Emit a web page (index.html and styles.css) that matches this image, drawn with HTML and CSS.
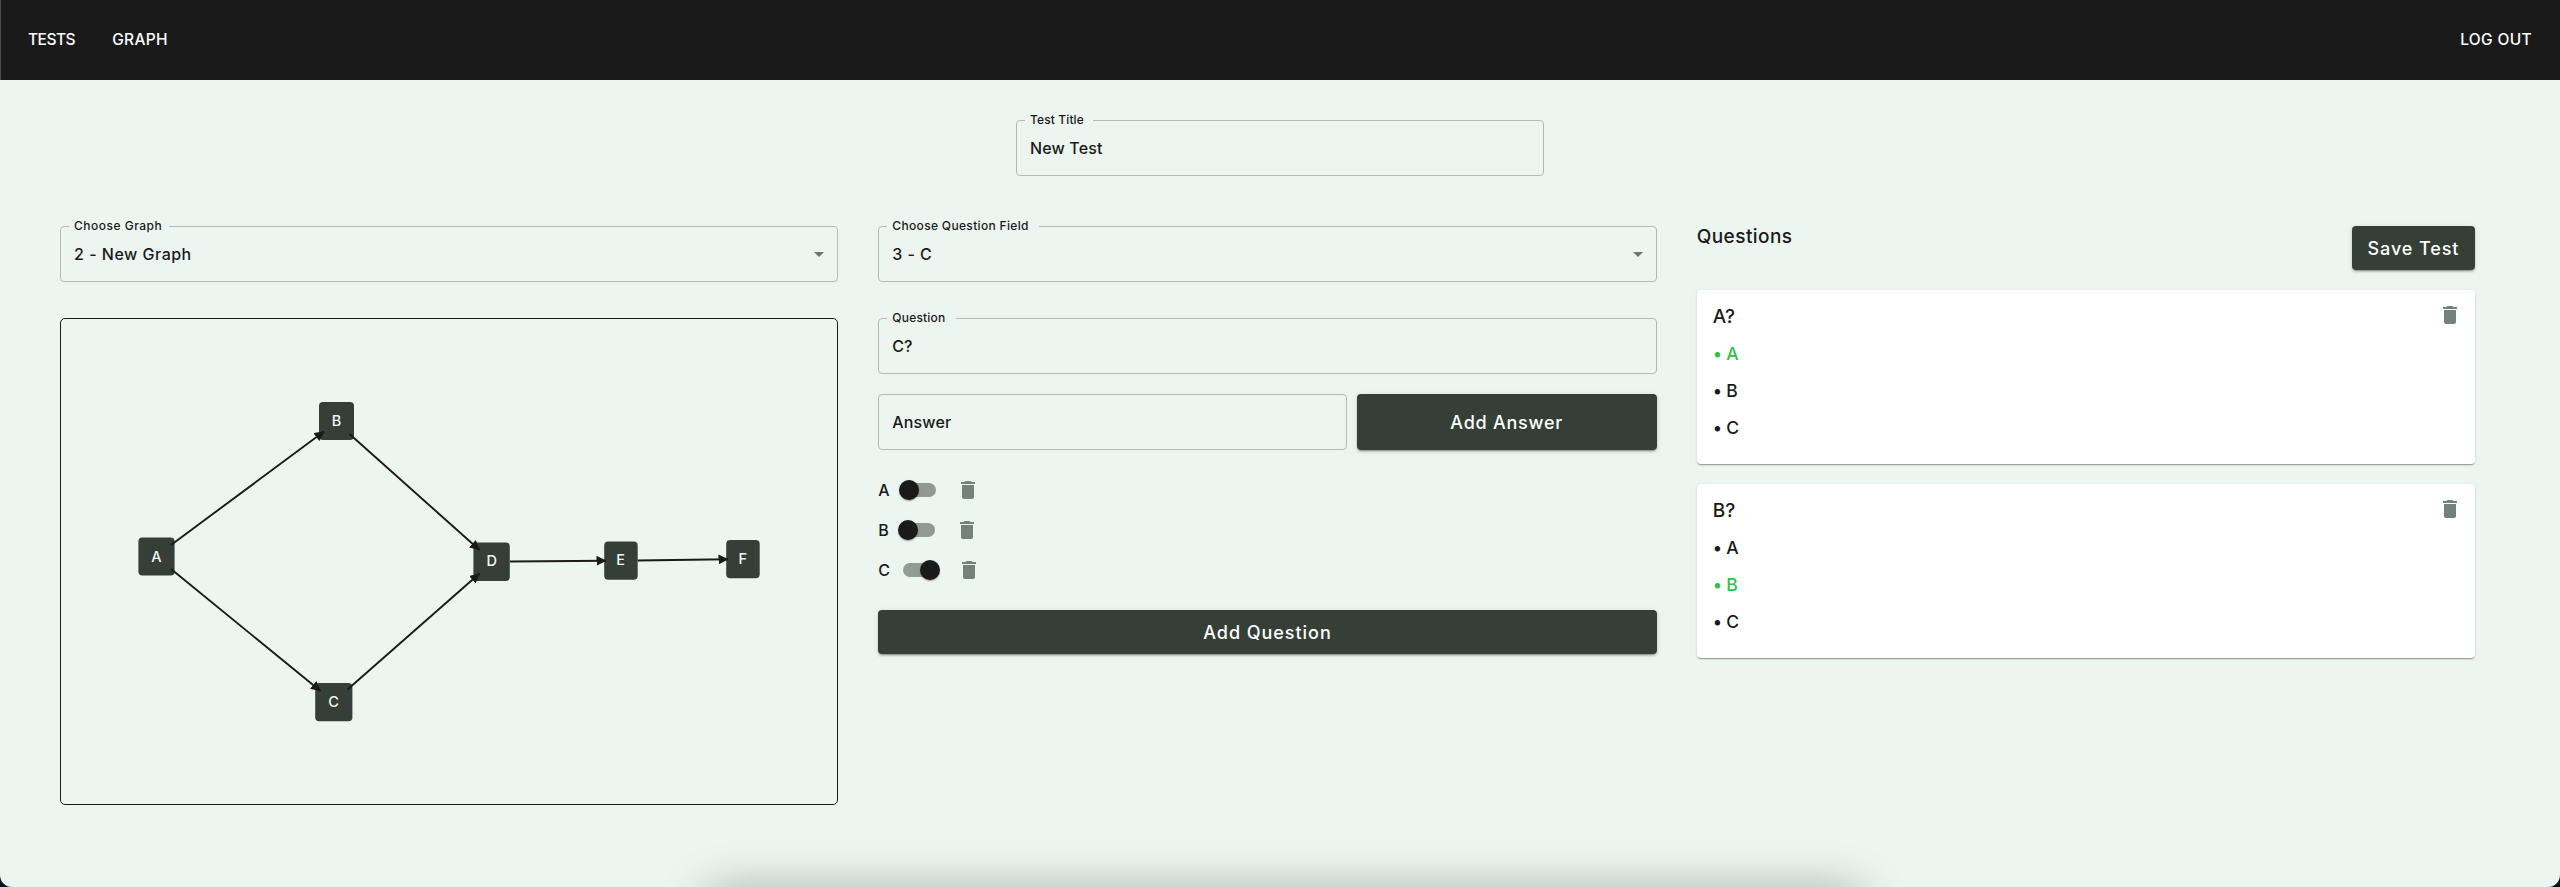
FILE: index.html
```html
<!DOCTYPE html>
<html lang="en">
<head>
<meta charset="utf-8">
<title>Test editor</title>
<link rel="stylesheet" href="styles.css">
</head>
<body>
<svg class="defs" width="0" height="0">
  <symbol id="trash" viewBox="0 0 24 24"><path d="M6 19c0 1.1.9 2 2 2h8c1.1 0 2-.9 2-2V7H6v12zM19 4h-3.500l-1-1h-5l-1 1H5v2h14V4z"/></symbol>
  <symbol id="caret" viewBox="0 0 24 24"><path d="M7 10l5 5 5-5z"/></symbol>
</svg>
<div class="window">
  <header class="bar">
    <nav class="nav"><a class="tests">TESTS</a><a class="graph-link">GRAPH</a></nav>
    <a class="logout">LOG OUT</a>
  </header>
  <main class="main">
    <fieldset class="field title-field"><legend class="l-title"><span>Test Title</span></legend><span class="v-title">New Test</span></fieldset>
    <div class="columns">
      <section class="col">
        <fieldset class="field"><legend class="l-graph"><span>Choose Graph</span></legend><span class="v-graph">2 - New Graph</span><svg class="caret"><use href="#caret"/></svg></fieldset>
        <div class="canvas">
          <svg class="diagram" viewBox="60 318 778 487" width="778" height="487">
            <defs><marker id="arrow" viewBox="0 0 10 10" refX="9.500" refY="5" markerWidth="10" markerHeight="10" markerUnits="userSpaceOnUse" orient="auto"><path d="M0 0L10 5L0 10z" fill="#1a1a1a"/></marker></defs>
            <g class="nodes">
              <rect x="138.400" y="537.400" width="36.200" height="38.200" rx="4"/>
              <rect x="319" y="402" width="35" height="38" rx="4"/>
              <rect x="315.200" y="683" width="37.200" height="38.200" rx="4"/>
              <rect x="473.400" y="542.500" width="36.400" height="38.400" rx="4"/>
              <rect x="604.200" y="541.600" width="33.500" height="38.200" rx="4"/>
              <rect x="726.200" y="540" width="33.500" height="38.200" rx="4"/>
            </g>
            <g class="edges">
              <line x1="171" y1="545" x2="324" y2="431.500"/>
              <line x1="171" y1="569" x2="320.500" y2="691"/>
              <line x1="349.500" y1="434" x2="479.500" y2="550"/>
              <line x1="347.500" y1="689.500" x2="479.500" y2="573.500"/>
              <line x1="510" y1="561.500" x2="606" y2="560.700"/>
              <line x1="637.700" y1="560.500" x2="728" y2="559.300"/>
            </g>
            <g class="labels">
              <text x="156.500" y="561.500">A</text><text x="336.500" y="425.500">B</text><text x="333.500" y="707.300">C</text>
              <text x="491.700" y="566.300">D</text><text x="620.500" y="565.300">E</text><text x="742.700" y="564">F</text>
            </g>
          </svg>
        </div>
      </section>
      <section class="col">
        <fieldset class="field"><legend class="l-choose"><span>Choose Question Field</span></legend><span class="v-c">3 - C</span><svg class="caret"><use href="#caret"/></svg></fieldset>
        <fieldset class="field question"><legend class="l-question"><span>Question</span></legend><span class="v-q">C?</span></fieldset>
        <div class="answer-row">
          <div class="field answer"><span class="v-answer">Answer</span></div>
          <button class="btn add-answer"><span>Add Answer</span></button>
        </div>
        <div class="answers">
          <div class="opt"><span class="o-a">A</span><i class="switch"></i><svg class="trash"><use href="#trash"/></svg></div>
          <div class="opt"><span class="o-b">B</span><i class="switch"></i><svg class="trash"><use href="#trash"/></svg></div>
          <div class="opt"><span class="o-c">C</span><i class="switch on"></i><svg class="trash"><use href="#trash"/></svg></div>
        </div>
        <button class="btn add-question"><span>Add Question</span></button>
      </section>
      <section class="col">
        <div class="head"><h2>Questions</h2><button class="btn save"><span>Save Test</span></button></div>
        <article class="card"><div class="card-head"><h3>A?</h3><svg class="trash"><use href="#trash"/></svg></div><p class="right">• A</p><p>• B</p><p>• C</p></article>
        <article class="card"><div class="card-head"><h3>B?</h3><svg class="trash"><use href="#trash"/></svg></div><p>• A</p><p class="right">• B</p><p>• C</p></article>
      </section>
    </div>
  </main>
  <div class="dock-shadow"></div>
</div>
</body>
</html>
```
FILE: styles.css
```css
* { box-sizing: border-box; }
html { background: #07121f; }
body { margin: 0; height: 887px; overflow: hidden; font: 500 16px/24px Inter, "Open Sans", sans-serif; color: #1a1a1a; }
.defs { display: block; position: absolute; }
.window { position: relative; height: 887px; overflow: hidden; background: #ecf5f0; border-radius: 0 0 12px 12px; }
.bar { height: 80px; padding: 0 28px; display: flex; align-items: center; justify-content: space-between; background: #1a1a1a; border-left: 1px solid #484848; color: #fff; font-size: 15.500px; }
.nav { display: flex; gap: 37px; margin-left: -1px; }
.tests { letter-spacing: -.5px; }
.graph-link, .logout { letter-spacing: .35px; }
.main { padding: 40px 85px 0 60px; }
.field { position: relative; height: 56px; margin: 0; padding: 0 13px; border: 1px solid #b4bbb7; border-radius: 4px; min-width: 0; display: flex; align-items: center; justify-content: space-between; }
/* The legend occupies no height so that the outlined box keeps its full 56px. */
.field legend { float: none; height: 0; padding: 0 0 0 5px; margin-left: -5px; font-size: 12px; line-height: 0; white-space: nowrap; }
.field legend span { position: relative; top: -.7px; }
.l-title { width: 68px; letter-spacing: .12px; }
.l-graph { width: 100px; letter-spacing: .5px; }
.l-choose { width: 152px; letter-spacing: .33px; }
.l-question { width: 69px; letter-spacing: .2px; }
.v-title { letter-spacing: .15px; }
.v-graph { letter-spacing: .5px; }
.v-c { letter-spacing: .4px; }
.v-answer { letter-spacing: .15px; }
.title-field { width: 528px; margin-left: 956px; }
.columns { display: grid; grid-template-columns: repeat(3, minmax(0, 1fr)); gap: 40px; margin-top: 50px; }
.caret { width: 24px; height: 24px; margin-right: -7px; fill: #6d736f; }
.canvas { height: 487px; margin-top: 36px; border: 1px solid #1a1a1a; border-radius: 5px; overflow: hidden; }
.diagram { display: block; margin: -1px; }
.nodes { fill: #363f37; }
.edges { stroke: #1a1a1a; stroke-width: 1.900; }
.edges line { marker-end: url(#arrow); }
.labels { fill: #f4f7f5; font-size: 14.500px; font-weight: 500; text-anchor: middle; }
.question { margin-top: 36px; }
.answer-row { display: flex; gap: 10px; margin-top: 20px; }
.answer { flex: 1; }
.btn { display: flex; align-items: center; justify-content: center; height: 44px; padding: 1px 0 0; border: 0; border-radius: 4px; background: #363f37; color: #fff; font: 500 18px/28px Inter, "Open Sans", sans-serif; white-space: nowrap; box-shadow: 0 3px 1px -2px rgba(0,0,0,.2), 0 2px 2px 0 rgba(0,0,0,.14), 0 1px 5px 0 rgba(0,0,0,.12); }
.add-answer { width: 300px; height: 56px; letter-spacing: .75px; }
.add-question { width: 100%; margin-top: 20px; letter-spacing: .95px; }
.save { width: 123px; letter-spacing: .9px; }
.answers { padding-top: 20px; }
.opt { display: flex; align-items: center; height: 40px; }
.o-a { width: 12px; }
.o-b { width: 11px; }
.o-c { width: 13px; }
.switch { position: relative; width: 34px; height: 14px; margin: 0 20px 0 12px; border-radius: 7px; background: #929894; }
.switch::after { content: ""; position: absolute; left: -3px; top: -3px; width: 20px; height: 20px; border-radius: 50%; background: #1a1a1a; box-shadow: 0 2px 1px -1px rgba(0,0,0,.2), 0 1px 1px rgba(0,0,0,.14), 0 1px 3px rgba(0,0,0,.12); }
.switch.on { background: #909c95; }
.switch.on::after { left: 17px; }
.trash { width: 24px; height: 24px; flex: none; fill: #73837b; }
.head { display: flex; justify-content: space-between; height: 64px; }
h2 { margin: -3px 0 0; font-size: 19px; line-height: 28px; font-weight: 500; letter-spacing: .45px; }
.card { height: 174px; margin-bottom: 20px; padding: 13px 13px 0 16px; border-radius: 4px; background: #fff; box-shadow: 0 2px 1px -1px rgba(0,0,0,.2), 0 1px 1px rgba(0,0,0,.14), 0 1px 3px rgba(0,0,0,.12); }
.card-head { display: flex; justify-content: space-between; height: 32px; }
h3 { margin: 0; font-size: 19px; line-height: 28px; font-weight: 500; }
.card p { margin: 0; font-size: 17.500px; line-height: 37px; letter-spacing: -.2px; }
.card .right { color: #2fc24a; }
.dock-shadow { position: absolute; left: 706px; right: 698px; top: 890px; height: 60px; border-radius: 20px; box-shadow: 0 0 46px 2px rgba(0,0,0,.28); }
```
